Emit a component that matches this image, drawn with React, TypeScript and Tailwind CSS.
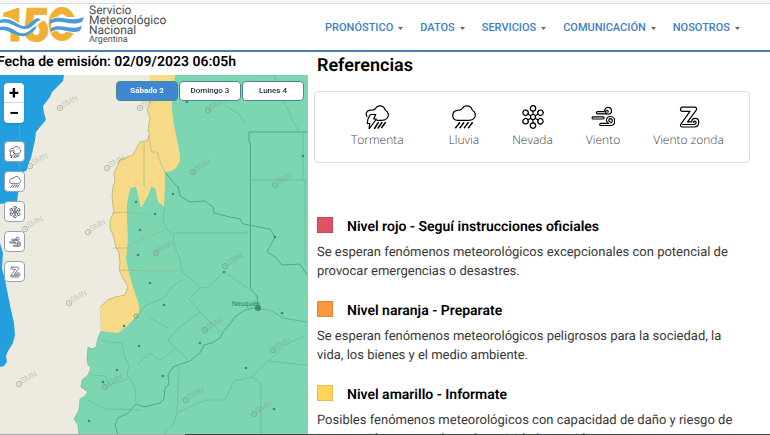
import type { ReactNode } from "react";

type IconProps = { className?: string };

const Icon = ({
  className = "size-6",
  children,
}: {
  className?: string;
  children: ReactNode;
}) => (
  <svg
    viewBox="0 0 24 24"
    className={className}
    fill="none"
    stroke="currentColor"
    strokeWidth="1.2"
    strokeLinecap="round"
    strokeLinejoin="round"
    aria-hidden="true"
  >
    {children}
  </svg>
);

const StormIcon = ({ className }: IconProps) => (
  <Icon className={className}>
    <path d="M2 11.500C0 8.500 2 5.200 5.500 5.200c1.800.2 3.500-.2 5-1.700C12 .6 16 0 18.400 2c1.300 1 1.600 2 1.900 3.200 3.200 1.300 3.800 5.300 2 7.800-1.300 1.800-3.300 2.300-5.300 2.300h-5" />
    <path d="M5.500 9.500h5.200l-2 4.500h2.800L4 24l.8-5.500H2.200l.9-5z" />
    <path
      d="m13.200 17.700-3.700 5.800M16.800 17.700l-3.700 5.300M20.300 17.700l-3.600 4.800"
      strokeWidth="1.500"
    />
  </Icon>
);

const RainIcon = ({ className }: IconProps) => (
  <Icon className={className}>
    <path d="M5.500 15.300C-.5 15.300-1 6.400 5.200 5.300c2 .1 3.600-.2 5-1.700C12 .6 16 0 18.400 2c1.300 1 1.600 2 1.900 3.200 3.200 1.300 3.800 5.300 2 7.800-1.300 1.800-3.300 2.300-5.300 2.300z" />
    <path
      d="m7.500 17.700-3.800 5M11.700 17.700l-3.700 5M16 17.700l-3.600 5M20.200 17.700l-3.600 5"
      strokeWidth="1.500"
      strokeDasharray="2.800 1.400"
    />
  </Icon>
);

const SnowIcon = ({ className }: IconProps) => (
  <Icon className={className}>
    <circle cx="12" cy="12" r="2.500" />
    {[0, 60, 120, 180, 240, 300].map((angle) => (
      <g key={angle} transform={`rotate(${angle} 12 12)`}>
        <circle cx="12" cy="3.400" r="2.700" />
        <path d="M12 6.100v3.300" />
      </g>
    ))}
  </Icon>
);

const WindIcon = ({ className }: IconProps) => (
  <Icon className={className}>
    <path d="M15 8.800H6.500a1.100 1.100 0 0 1 0-2.200h7.300c-.5-2.300.9-4.300 3-4.300 2.200 0 3.700 1.500 3.700 3.400 0 2-1.500 3.400-3.500 3.400-2.500 0-3.200-2.800-1.300-3.600 1.200-.3 1.900.8 1.200 1.700" />
    <path d="M12 14H2.200a1.100 1.100 0 0 1 0-2.200H12a1.100 1.100 0 0 1 0 2.200z" />
    <path d="M20 20.500H9.800a1.100 1.100 0 0 1 0-2.200h8c-1.600-.6-2.500-2-2.300-3.600.3-2 2-3.200 4-3.200 2.500 0 4.200 2 4.200 4.500s-1.500 4.500-3.700 4.500M19.800 18c2.300-1.200 1.900-4.300-.4-4.300-1.900.1-2.200 2.700-.3 2.900" />
  </Icon>
);

const ZondaIcon = ({ className }: IconProps) => (
  <Icon className={className}>
    <path d="M5.500 2.200h12.200c1.700 0 2.500 1.800 1.400 3.200L10.500 16.800h4.300c0-2 1.500-3.400 3.400-3.400 2.100 0 3.600 1.500 3.600 3.700 0 3-2 4.900-4.800 4.900H5.400c-1.700 0-2.500-1.700-1.400-3.100L13 6.300H5.500c-2.700 0-2.700-4.100 0-4.100z" />
    <path d="M5.500 19.500h11.700c2.300 0 2.600-3.400.6-3.500-1.300 0-1.500 1.400-.7 1.800" />
  </Icon>
);

const phenomena = [
  { name: "Tormenta", Glyph: StormIcon },
  { name: "Lluvia", Glyph: RainIcon },
  { name: "Nevada", Glyph: SnowIcon },
  { name: "Viento", Glyph: WindIcon },
  { name: "Viento zonda", Glyph: ZondaIcon },
];

const menu = ["PRONÓSTICO", "DATOS", "SERVICIOS", "COMUNICACIÓN", "NOSOTROS"];

const days = ["Sábado 2", "Domingo 3", "Lunes 4"];

const levels = [
  {
    color: "bg-[#de5262]",
    title: "Nivel rojo - Seguí instrucciones oficiales",
    text: "Se esperan fenómenos meteorológicos excepcionales con potencial de provocar emergencias o desastres.",
  },
  {
    color: "bg-[#fa963c]",
    title: "Nivel naranja - Preparate",
    text: "Se esperan fenómenos meteorológicos peligrosos para la sociedad, la vida, los bienes y el medio ambiente.",
  },
  {
    color: "bg-[#fdd35a]",
    title: "Nivel amarillo - Informate",
    text: "Posibles fenómenos meteorológicos con capacidad de daño y riesgo de interrupción momentánea de actividades cotidianas.",
  },
];

const watermarks = [
  [60, 33], [140, 33], [30, 91], [107, 93], [25, 154], [88, 157],
  [69, 228], [19, 309], [105, 312], [208, 35], [193, 97], [275, 110],
  [156, 178], [225, 191], [205, 255], [273, 275], [186, 325], [254, 339],
];

const towns = [
  [136, 127], [140, 155], [138, 180], [150, 208], [155, 139], [173, 119],
  [187, 27], [303, 81], [275, 162], [224, 197], [164, 230], [282, 238],
  [139, 271], [117, 295], [103, 307], [89, 346], [200, 268], [163, 301],
  [246, 293], [274, 334], [124, 251],
];

const Logo = () => (
  <a href="#" className="flex items-start gap-[5px]">
    <svg
      viewBox="0 4 84 46"
      className="h-[46px] w-[84px] overflow-visible"
      aria-label="150"
    >
      <g
        fill="#f0b034"
        stroke="#f0b034"
        strokeWidth="1"
        fontFamily="Roboto, sans-serif"
        fontWeight="900"
        fontSize="46"
      >
        <text x="0" y="41">1</text>
        <text x="23" y="41">5</text>
      </g>
      <ellipse cx="62" cy="24" rx="10" ry="13.500" fill="none" stroke="#f0b034" strokeWidth="7" />
      <path d="M-1 18C8 14 15 21 23 26c8 2 9-7 17-8l4 3c-7 0-8 13-17 13C18 35 10 28-1 32z" fill="#fff" />
      <path d="M0 20c8-3 14 2 20 5 8 4 11-5 18-7l3 2c-6 1-8 9-16 9C17 29 9 20 0 23z" fill="#4b9bdc" />
      <path d="M0 27c9-2 14 4 20 6 9 2 11-6 17-7l-3 5c-5 3-7 6-13 5C13 35 8 29 0 30z" fill="#4b9bdc" />
      <path d="M51 19c11-7 19 2 33-4v17c-14 5-22-6-33 1z" fill="#fff" />
      <path d="M50 20c11-6 20 3 34-3l-2 5c-13 5-21-4-32 2z" fill="#4b9bdc" />
      <path d="M51 28c11-5 19 3 31-2l-2 5c-11 4-20-5-29 1z" fill="#4b9bdc" />
    </svg>
    <span className="flex flex-col pt-px text-[12px] leading-[10px] text-[#4d4d4d]">
      <span>Servicio</span>
      <span>Meteorológico</span>
      <span>Nacional</span>
      <span className="text-[9px]">Argentina</span>
    </span>
  </a>
);

const Header = () => (
  <header className="flex h-[52px] shrink-0 flex-col border-b-2 border-[#4a7fb5]">
    <div className="h-1 border-b border-[#dedede] bg-[#f8f8f8]" />
    <div className="flex flex-1 items-start justify-between pr-[30px]">
      <Logo />
      <nav className="flex gap-[17px] pt-4">
        {menu.map((item) => (
          <button
            key={item}
            className="flex items-center gap-[5px] text-[11px] leading-4 font-medium text-[#3f80c3]"
          >
            {item}
            <svg viewBox="0 0 5 3" className="mt-px h-[3px] w-[5px] fill-[#666]">
              <path d="M0 0h5L2.500 3z" />
            </svg>
          </button>
        ))}
      </nav>
    </div>
  </header>
);

const AlertMap = () => (
  <svg
    viewBox="0 0 308 360"
    preserveAspectRatio="xMinYMin slice"
    className="absolute inset-0 size-full"
    fontFamily="Roboto, sans-serif"
  >
    <rect width="308" height="360" fill="#edebdf" />
    <g fill="#239fdf">
      <path d="M0 0H64L63 6 57 12 52 17 50 22 43 31 44 38 46 45 40 52 36 57 35 65 33 74 31 83 28 90 27 95 22 98 20 101 19 112 17 127 8 128 0 129Z" />
      <path d="M0 168 3 178 2 193 5 205 8 220 11 235 14 248 15 260 13 268 8 276 6 281 7 287 4 291 0 292Z" />
    </g>
    <path d="M19.500 8V100" stroke="#54aee0" strokeWidth=".5" />
    <path
      d="M150 0V12L148 20 150 28 147 35 150 43 148 55 150 60 147 66 140 67 137 72 133 80 127 82 120 85 117 92 114 98 115 106 113 112 112 120 113 131 114 137 110 145 110 153 113 160 116 172 119 178 120 188 119 195 124 205 128 211 125 220 115 222 108 225 100 232 101 256 98 263 96 272 92 274 88 272 87 283 88 290 91 292 88 300 82 305 81 312 88 317 84 322 80 324 79 335 74 344 78 350 79 360H308V0Z"
      fill="#7bd6b1"
    />
    <path
      d="M150 0V12L148 20 150 28 147 35 150 43 148 55 150 60 147 66 140 67 137 72 133 80 127 82 120 85 117 92 114 98 115 106 113 112 112 120 113 131 114 137 110 145 110 153 113 160 116 172 119 178 120 188 119 195 124 205 128 211 125 220 115 222 108 225 100 232 101 256 118 258 126 252 133 245 139 238 139 230 135 218 130 202 126 184 128 165 127 145 127 130 129 118 131 113 136 112 138 120 141 133 149 119 151 112 155 113 158 127 164 132 165 110 165 97 170 97 176 93 180 86 180 80 177 65 174 50 172 35 172 20 174 10 175 0Z"
      fill="#f7da87"
    />
    <g fill="none" stroke="#62b496" strokeWidth=".6">
      <path
        d="M150 12 148 20 150 28 147 35 150 43 148 55 150 60 147 66 140 67 137 72 133 80 127 82 120 85 117 92 114 98 115 106 113 112 112 120 113 131 114 137 110 145 110 153 113 160 116 172 119 178 120 188 119 195 124 205 128 211 125 220 115 222 108 225 100 232"
        stroke="#b9a468"
      />
      <path d="M101 256 98 263 96 272 92 274 88 272 87 283 88 290 91 292 88 300 82 305 81 312 88 317 84 322 80 324 79 335 74 344 78 350 79 360" />
      <path
        d="M148 60 152 77 157 77 160 86 165 97M144 68V112M112 138 125 137 150 140M113 173H126L140 165 165 155M120 195 150 196H180"
        stroke="#97b483"
      />
      <path d="M173 158H248M251 0 275 0 279 20 287 33 293 47 300 57M250 105H307M303 57V105M305 105V190" />
      <path d="M165 132 163 145 167 155 173 159 175 172 180 185 182 197 190 203 200 212 207 213 224 197 250 215M200 213 189 224 201 238M182 205 172 212 165 222 145 231 133 246" />
      <path d="M168 265 180 252 200 237 221 257M150 243 168 253M168 265 188 285M175 273 160 286 150 278 137 290M101 265 110 267 122 268 124 280 129 290 127 300 135 312 136 328M91 300 105 301 110 310 128 304M88 325 105 334 140 335" />
      <path d="M179 291 177 338 205 325 225 325 234 306 252 302 268 286 285 270 305 261M268 286 307 290M252 302 261 308V360M177 338 173 350 163 360M225 30 240 40 245 50" />
    </g>
    <g fill="none" stroke="#4da287" strokeWidth=".9">
      <path d="M165 97 172 106 178 112 180 121 190 127 205 126 213 132 214 138 230 142 240 144 243 149 270 154 275 162 267 177 275 182 282 190 300 189 307 200" />
      <path d="M307 57H249V67L250.500 68V214L257 221 258 232 245 235 235 242 229 250 223 257 220 263 212 268 204 270 200 278 190 286 173 292 168 300 169 309 165 313 164 324 160 328 145 332 136 329 128 338 118 343 115 350 118 360" />
      <path d="M258 234 270 235 283 243 307 247" strokeWidth=".6" />
    </g>
    <g fill="#3c8c77">
      {towns.map(([x, y]) => (
        <circle key={`${x}-${y}`} cx={x} cy={y} r="1.300" />
      ))}
      <circle cx="258" cy="233" r="3" />
    </g>
    <circle cx="136" cy="241" r="2" fill="none" stroke="#98967c" />
    <text x="232" y="231" fontSize="7" fill="#397c6b">
      Neuquén
    </text>
    <g fill="#888" opacity=".45">
      {watermarks.map(([x, y]) => (
        <g key={`${x}-${y}`} transform={`translate(${x} ${y})`}>
          <circle r="2.700" fill="none" stroke="#777" strokeWidth="1" />
          <path d="M0-1.500V.3H1.500" fill="none" stroke="#777" strokeWidth=".7" />
          <text x="3" y="1" fontSize="8" transform="rotate(-27)" opacity=".8">
            SMN
          </text>
        </g>
      ))}
    </g>
  </svg>
);

const MapPanel = () => (
  <section className="flex w-2/5 shrink-0 flex-col">
    <h2 className="-ml-[3px] h-[23px] text-[14px] leading-5 font-semibold whitespace-nowrap text-black">
      Fecha de emisión: 02/09/2023 06:05h
    </h2>
    <div className="relative flex-1 overflow-hidden">
      <AlertMap />
      <div className="relative flex items-start justify-between pt-1.5 pr-1 pl-1">
        <div className="mt-0.5 flex flex-col gap-[18px]">
          <div className="flex w-5 flex-col divide-y divide-gray-300 rounded-sm bg-white text-[18px] leading-5 font-bold text-black shadow">
            <button className="h-5" aria-label="Acercar">+</button>
            <button className="h-5" aria-label="Alejar">−</button>
          </div>
          <div className="flex flex-col gap-[9px]">
            {phenomena.map(({ name, Glyph }) => (
              <button
                key={name}
                aria-label={name}
                className="flex size-[21px] items-center justify-center rounded border border-gray-400 bg-white text-gray-800"
              >
                <Glyph className="size-3" />
              </button>
            ))}
          </div>
        </div>
        <div className="flex gap-px">
          {days.map((day, i) => (
            <button
              key={day}
              className={`${i === 0 ? "bg-[#3f87d3] font-bold text-white" : "bg-white font-medium text-gray-800"} h-5 w-[62px] rounded border border-[#4a8a86] text-[8px] leading-4`}
            >
              {day}
            </button>
          ))}
        </div>
      </div>
    </div>
  </section>
);

const References = () => (
  <section className="min-w-0 flex-1 pr-5 pl-[6px]">
    <h1 className="pl-[3px] text-[18px] leading-7 font-semibold text-black">
      Referencias
    </h1>
    <ul className="mt-[11px] flex h-[72px] items-start gap-[33px] rounded border border-[#dde0e0] pt-[13px] pl-9 font-['Open_Sans',sans-serif] text-[12px] leading-4 font-light text-[#444]">
      {phenomena.map(({ name, Glyph }) => (
        <li
          key={name}
          className="flex flex-col items-center gap-[3px] whitespace-nowrap first:mr-3"
        >
          <Glyph className="size-6 text-black" />
          {name}
        </li>
      ))}
    </ul>
    <div className="mt-[54px] flex flex-col gap-5 pr-4 pl-[3px]">
      {levels.map(({ color, title, text }) => (
        <article key={title}>
          <div className="flex h-5 gap-[14px]">
            <span className={`${color} size-4 border border-black/10`} />
            <h3 className="text-[14px] leading-5 font-semibold text-black">
              {title}
            </h3>
          </div>
          <p className="mt-[6px] text-[13px] leading-[19px] text-[#383838]">
            {text}
          </p>
        </article>
      ))}
    </div>
  </section>
);

export default function App() {
  return (
    <div className="flex h-screen flex-col overflow-hidden bg-white font-[Roboto,sans-serif] [text-rendering:geometricPrecision]">
      <Header />
      <main className="flex min-h-0 flex-1">
        <MapPanel />
        <References />
      </main>
      <div className="flex h-px shrink-0">
        <div className="w-[24%] bg-[#aaa]" />
        <div className="flex-1 bg-[#444]" />
      </div>
    </div>
  );
}
